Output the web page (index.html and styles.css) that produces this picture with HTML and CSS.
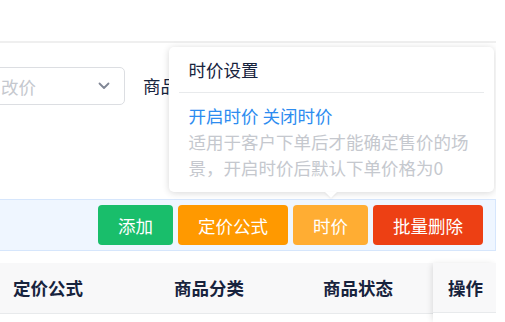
FILE: index.html
```html
<!DOCTYPE html>
<html lang="zh-CN">
<head>
    <meta charset="UTF-8">
    <meta name="viewport" content="width=device-width, initial-scale=1.0">
    <title>商品列表</title>
    <link rel="stylesheet" href="styles.css">
</head>
<body>
    <div class="page">
        <div class="topbar"></div>

        <div class="filters">
            <div class="select">
                <span class="placeholder">改价</span>
                <svg class="chevron" width="12" height="8" viewBox="0 0 12 8">
                    <path d="M1.5 1.5 L6 6 L10.5 1.5" fill="none" stroke="#808695" stroke-width="1.8" stroke-linecap="round" stroke-linejoin="round"/>
                </svg>
            </div>
            <label class="filter-label">商品状态</label>
        </div>

        <div class="toolbar">
            <button class="btn btn-green">添加</button>
            <button class="btn btn-orange">定价公式</button>
            <span class="poptip">
                <div class="popper">
                    <div class="popper-title">时价设置</div>
                    <div class="popper-body">
                        <div class="popper-links"><a href="#">开启时价</a> <a href="#">关闭时价</a></div>
                        <div class="popper-desc">适用于客户下单后才能确定售价的场景，开启时价后默认下单价格为0</div>
                    </div>
                </div>
                <button class="btn btn-light">时价</button>
            </span>
            <button class="btn btn-red">批量删除</button>
        </div>

        <div class="table">
            <div class="thead">
                <div class="th col-formula">定价公式</div>
                <div class="th col-category">商品分类</div>
                <div class="th col-status">商品状态</div>
            </div>
            <div class="fixed-right">
                <div class="th">操作</div>
            </div>
        </div>
    </div>
</body>
</html>
```

FILE: styles.css
```css
body {
    margin: 0;
    font-family: "Noto Sans CJK SC", "Noto Sans", sans-serif;
    font-size: 17.5px;
    color: #515a6e;
    background: #fff;
}
.page {
    width: 496px;
    height: 322px;
    overflow: hidden;
}
.topbar {
    height: 41px;
    border-bottom: 2px solid #efefef;
}

/* filtros */
.filters {
    height: 156px;
    padding-top: 24px;
    box-sizing: border-box;
    display: flex;
    align-items: flex-start;
}
.select {
    width: 140px;
    height: 38px;
    margin-left: -15px;
    padding: 0 14px 0 15px;
    box-sizing: border-box;
    border: 1px solid #dcdee2;
    border-radius: 5px;
    display: flex;
    align-items: center;
    justify-content: space-between;
}
.placeholder {
    color: #c5c8ce;
}
.filter-label {
    margin-left: 18px;
    line-height: 38px;
    color: #17233d;
}

/* barra de botones */
.toolbar {
    height: 52px;
    box-sizing: border-box;
    background: #eff6ff;
    border: 1px solid #d6e6fc;
    border-left: none;
    display: flex;
    align-items: center;
    justify-content: flex-end;
    gap: 5px;
    padding-right: 12px;
}
.btn {
    height: 40px;
    padding: 0 20px;
    border: none;
    border-radius: 4px;
    color: #fff;
    font-family: inherit;
    font-size: 17.5px;
    cursor: pointer;
}
.btn-green {
    background: #19be6b;
}
.btn-orange {
    background: #ff9900;
}
.btn-light {
    background: #ffad33;
}
.btn-red {
    background: #ed4014;
}

/* poptip */
.poptip {
    position: relative;
    display: inline-block;
}
.poptip .btn {
    display: block;
}
.popper {
    position: absolute;
    bottom: 53px;
    left: 50%;
    width: 325px;
    margin-left: -162px;
    background: #fff;
    border-radius: 5px;
    box-shadow: 0 1px 7px rgba(0, 0, 0, 0.16);
    text-align: left;
    z-index: 10;
}
.popper::after {
    content: "";
    position: absolute;
    left: 50%;
    bottom: -6px;
    margin-left: -6px;
    border-width: 6px 6px 0;
    border-style: solid;
    border-color: #fff transparent transparent;
    filter: drop-shadow(0 1px 1px rgba(0, 0, 0, 0.08));
}
.popper-title {
    position: relative;
    padding: 10px 20px;
    line-height: 26px;
    color: #17233d;
}
.popper-title::after {
    content: "";
    position: absolute;
    left: 10px;
    right: 10px;
    bottom: 0;
    height: 1px;
    background: #e8eaec;
}
.popper-body {
    padding: 10px 20px 11px;
    line-height: 26px;
}
.popper-links a {
    color: #2d8cf0;
    text-decoration: none;
}
.popper-desc {
    color: #c5c8ce;
}

/* tabla */
.table {
    position: relative;
    margin-top: 12px;
    height: 59px;
}
.thead {
    height: 50px;
    background: #f8f8f9;
    border-bottom: 1px solid #e8eaec;
    display: flex;
}
.th {
    line-height: 50px;
    padding-left: 13px;
    font-weight: bold;
    color: #17233d;
    box-sizing: border-box;
}
.col-formula {
    width: 161px;
}
.col-category {
    width: 149px;
}
.col-status {
    width: 123px;
}
.fixed-right {
    position: absolute;
    top: 0;
    right: 0;
    bottom: 0;
    width: 63px;
    background: #fff;
    box-shadow: -2px 0 6px -1px rgba(0, 0, 0, 0.12);
}
.fixed-right .th {
    height: 50px;
    padding-left: 15px;
    background: #f8f8f9;
    border-bottom: 1px solid #e8eaec;
}
```
